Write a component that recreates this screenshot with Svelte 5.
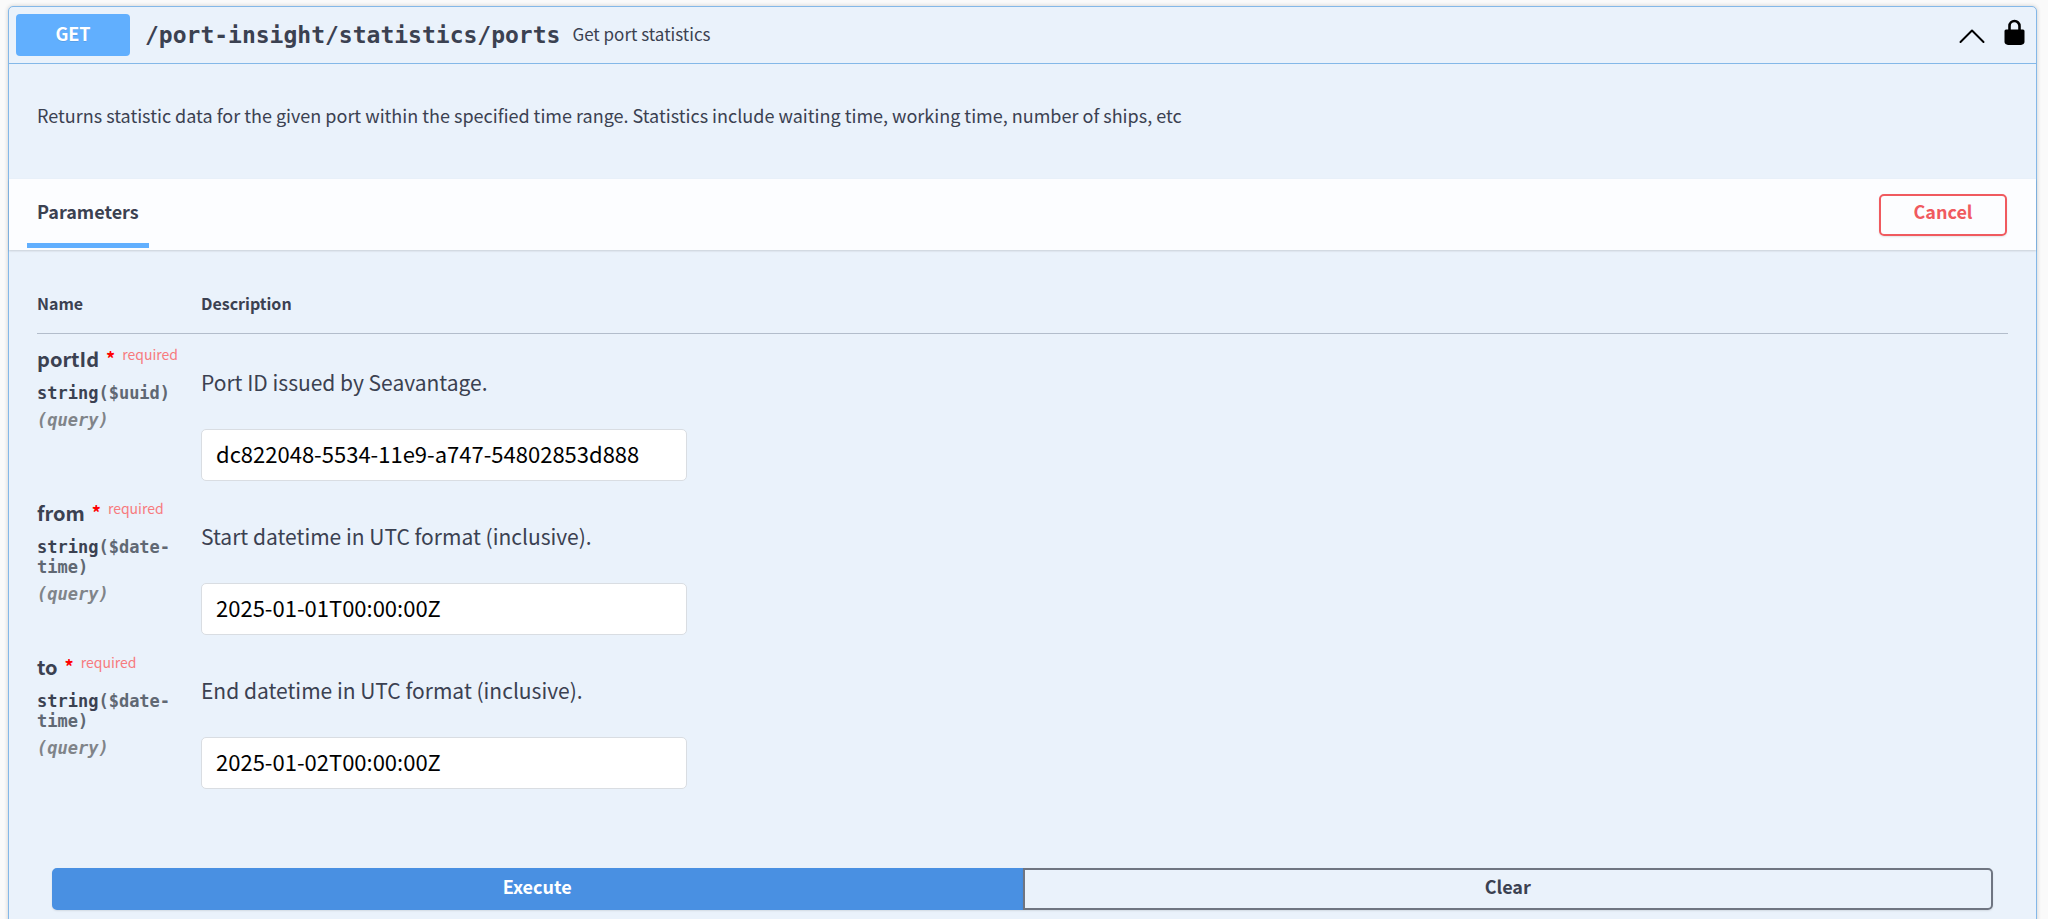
<script>
  let expanded = true;

  let params = [
    {
      name: 'portId',
      format: '($uuid)',
      description: 'Port ID issued by Seavantage.',
      value: 'dc822048-5534-11e9-a747-54802853d888'
    },
    {
      name: 'from',
      format: '($date-time)',
      description: 'Start datetime in UTC format (inclusive).',
      value: '2025-01-01T00:00:00Z'
    },
    {
      name: 'to',
      format: '($date-time)',
      description: 'End datetime in UTC format (inclusive).',
      value: '2025-01-02T00:00:00Z'
    }
  ];

  function toggle() {
    expanded = !expanded;
  }

  function clearParams() {
    params = params.map((param) => ({ ...param, value: '' }));
  }
</script>

<section class="opblock">
  <header class="summary">
    <button class="summary-control" on:click={toggle} aria-expanded={expanded}>
      <span class="method">GET</span>
      <span class="path">/port-insight/statistics/ports</span>
      <span class="summary-text">Get port statistics</span>
    </button>
    <button class="icon-button" on:click={toggle} aria-label="Toggle operation">
      <svg width="26" height="26" viewBox="0 0 26 26" fill="none" stroke="#000" stroke-width="2" stroke-linecap="round" stroke-linejoin="round" aria-hidden="true">
        <polyline points="1.5 20 13 8.5 24.5 20"></polyline>
      </svg>
    </button>
    <button class="icon-button" aria-label="Authorization">
      <svg width="21" height="32" viewBox="0 0 21 32" aria-hidden="true">
        <path d="M5.500 12V7a5 5 0 0 1 10 0V12" fill="none" stroke="#000" stroke-width="2.600"></path>
        <path d="M2 10.500h17a1.500 1.500 0 0 1 1.500 1.500V23c0 1.500-1.500 2.700-3.500 3H4C2 25.700.5 24.500.5 23V12A1.500 1.500 0 0 1 2 10.500z" fill="#000"></path>
      </svg>
    </button>
  </header>

  {#if expanded}
    <div class="description">
      <p>
        Returns statistic data for the given port within the specified time range. Statistics include waiting time, working time, number of ships, etc
      </p>
    </div>

    <div class="section-header">
      <h4>Parameters</h4>
      <button class="btn cancel">Cancel</button>
    </div>

    <div class="parameters">
      <table>
        <thead>
          <tr>
            <th class="col-name">Name</th>
            <th>Description</th>
          </tr>
        </thead>
        <tbody>
          {#each params as param (param.name)}
            <tr>
              <td class="col-name">
                <label class="param-name" for={param.name}>{param.name}<span class="star">*</span><span class="required">required</span></label>
                <div class="param-type">string<span>{param.format}</span></div>
                <div class="param-in">(query)</div>
              </td>
              <td>
                <p class="param-description">{param.description}</p>
                <input id={param.name} type="text" bind:value={param.value} />
              </td>
            </tr>
          {/each}
        </tbody>
      </table>
    </div>

    <div class="actions">
      <button class="btn execute">Execute</button>
      <button class="btn clear" on:click={clearParams}>Clear</button>
    </div>
  {/if}
</section>

<style>
  :global(body) {
    background: #fafafa;
    overflow: hidden;
  }

  .opblock {
    margin: 6px 11px 0 8px;
    padding-bottom: 40px;
    border: 1px solid #84b8e8;
    border-radius: 5px;
    background: #eaf2fb;
    box-shadow: 0 0 4px rgba(0, 0, 0, 0.19);
    color: #3b4151;
    font-family: 'Noto Sans CJK KR', 'Noto Sans', sans-serif;
  }

  button,
  input {
    font-family: inherit;
  }

  .summary {
    display: flex;
    align-items: center;
    gap: 19px;
    padding: 7px 11px 7px 7px;
    border-bottom: 1px solid #84b8e8;
  }

  .summary-control {
    display: flex;
    flex: 1;
    align-items: center;
    padding: 0;
    border: 0;
    background: none;
    color: inherit;
    text-align: left;
    cursor: pointer;
  }

  .method {
    width: 114px;
    padding-bottom: 4px;
    border-radius: 4px;
    background: #61affe;
    color: #fff;
    font-size: 18px;
    font-weight: 700;
    line-height: 38px;
    text-align: center;
    text-shadow: 0 1px 0 rgba(0, 0, 0, 0.1);
  }

  .path {
    padding: 0 12px 0 15px;
    font-family: 'DejaVu Sans Mono', monospace;
    font-size: 23px;
    font-weight: 700;
  }

  .summary-text {
    padding-bottom: 3px;
    font-size: 17px;
  }

  .icon-button {
    display: flex;
    padding: 0;
    border: 0;
    background: none;
    cursor: pointer;
  }

  .description {
    padding: 37px 28px 50px;
  }

  .description p {
    margin: 0;
    font-size: 18px;
    line-height: 28px;
  }

  .section-header {
    display: flex;
    align-items: center;
    justify-content: space-between;
    height: 71px;
    padding: 0 29px 0 18px;
    background: rgba(255, 255, 255, 0.85);
    box-shadow: 0 1px 2px rgba(0, 0, 0, 0.15);
  }

  h4 {
    align-self: flex-end;
    margin: 0 0 2px;
    padding: 0 10px 18px;
    border-bottom: 5px solid #61affe;
    font-size: 18px;
    font-weight: 700;
    line-height: 28px;
  }

  .btn {
    box-sizing: border-box;
    height: 42px;
    padding: 0 0 7px;
    border: 2px solid #6f7581;
    border-radius: 5px;
    background: transparent;
    box-shadow: 0 1px 2px rgba(0, 0, 0, 0.1);
    color: #3b4151;
    font-size: 18px;
    font-weight: 700;
    line-height: 28px;
    cursor: pointer;
  }

  .cancel {
    width: 128px;
    border-color: #f05a5f;
    color: #f05a5f;
  }

  .parameters {
    padding: 36px 28px 72px;
  }

  table {
    width: 100%;
    border-collapse: collapse;
    table-layout: fixed;
  }

  th {
    padding: 4px 0 17px;
    border-bottom: 1px solid #b3bdcb;
    font-size: 16px;
    font-weight: 700;
    line-height: 26px;
    text-align: left;
  }

  td {
    padding: 11px 0 7px;
    vertical-align: top;
  }

  .col-name {
    width: 144px;
    padding-right: 20px;
  }

  .param-name {
    display: flex;
    align-items: flex-start;
    font-size: 20px;
    font-weight: 700;
    line-height: 28px;
  }

  .star {
    padding: 0 7px;
    color: #f00;
    font-size: 18px;
    line-height: 26px;
  }

  .required {
    color: #f77b7e;
    font-size: 14px;
    font-weight: 400;
    line-height: 18px;
  }

  .param-type,
  .param-in {
    font-family: 'DejaVu Sans Mono', monospace;
    font-size: 17px;
    font-weight: 700;
    line-height: 20px;
  }

  .param-type {
    padding: 10px 0 7px;
  }

  .param-type span {
    color: #606873;
  }

  .param-in {
    color: #808489;
    font-style: italic;
  }

  .param-description {
    margin: 0;
    padding: 22px 0 32px;
    font-size: 21px;
    line-height: 30px;
  }

  input {
    display: block;
    box-sizing: border-box;
    width: 486px;
    max-width: 100%;
    height: 52px;
    padding: 0 14px 4px;
    border: 1px solid #d9dde2;
    border-radius: 5px;
    background: #fff;
    color: #000;
    font-size: 22px;
  }

  .actions {
    display: flex;
    padding: 0 43px;
  }

  .actions .btn {
    flex: 1;
  }

  .execute {
    border-color: #4990e2;
    border-radius: 5px 0 0 5px;
    background: #4990e2;
    color: #fff;
  }

  .clear {
    border-radius: 0 5px 5px 0;
  }
</style>
